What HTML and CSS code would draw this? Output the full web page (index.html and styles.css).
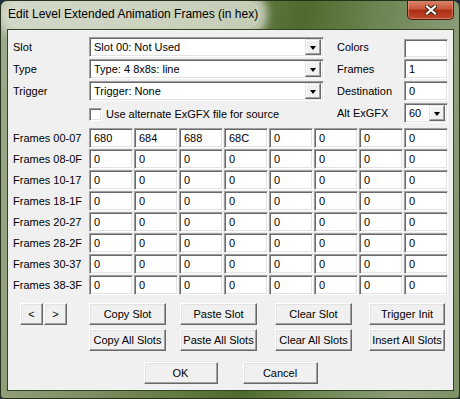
FILE: index.html
```html
<!DOCTYPE html>
<html lang="en">
<head>
    <meta charset="UTF-8">
    <title>Edit Level Extended Animation Frames (in hex)</title>
    <link rel="stylesheet" href="styles.css">
</head>
<body>
<div class="window">
    <div class="titlebar">
        <span class="title">Edit Level Extended Animation Frames (in hex)</span>
        <div class="close">
            <svg width="12" height="10" viewBox="0 0 12 10">
                <path d="M2 1.5 L10 8.5 M10 1.5 L2 8.5" stroke="#3b1f16" stroke-width="4.2" stroke-linecap="square"/>
                <path d="M2 1.5 L10 8.5 M10 1.5 L2 8.5" stroke="#fff" stroke-width="2.2" stroke-linecap="square"/>
            </svg>
        </div>
    </div>

    <div class="client">
        <!-- slot settings -->
        <div class="settings">
            <span class="label">Slot</span>
            <div class="combo sunken"><span>Slot 00: Not Used</span><i class="drop"></i></div>
            <span class="label side">Colors</span>
            <div class="edit sunken colors"></div>

            <span class="label">Type</span>
            <div class="combo sunken"><span>Type: 4 8x8s: line</span><i class="drop"></i></div>
            <span class="label side">Frames</span>
            <div class="edit sunken">1</div>

            <span class="label">Trigger</span>
            <div class="combo sunken"><span>Trigger: None</span><i class="drop"></i></div>
            <span class="label side">Destination</span>
            <div class="edit sunken">0</div>

            <span></span>
            <label class="check"><span class="box sunken"></span>Use alternate ExGFX file for source</label>
            <span class="label side">Alt ExGFX</span>
            <div class="combo sunken"><span>60</span><i class="drop"></i></div>
        </div>

        <!-- frame table -->
        <div class="frames" id="frames"></div>

        <div class="actions">
            <div class="nav"><button class="btn">&lt;</button><button class="btn">&gt;</button></div>
            <button class="btn">Copy Slot</button>
            <button class="btn">Paste Slot</button>
            <button class="btn">Clear Slot</button>
            <button class="btn last">Trigger Init</button>
            <span></span>
            <button class="btn">Copy All Slots</button>
            <button class="btn">Paste All Slots</button>
            <button class="btn">Clear All Slots</button>
            <button class="btn last">Insert All Slots</button>
        </div>

        <div class="footer">
            <button class="btn ok">OK</button>
            <button class="btn cancel">Cancel</button>
        </div>
    </div>
</div>
<script type="text/javascript">
    var frames = document.querySelector("#frames");
    var names = ["00-07", "08-0F", "10-17", "18-1F", "20-27", "28-2F", "30-37", "38-3F"];
    var first = ["680", "684", "688", "68C", "0", "0", "0", "0"];

    for (var r = 0; r < names.length; r++) {
        var label = document.createElement("span");
        label.className = "label";
        label.innerText = "Frames " + names[r];
        frames.appendChild(label);

        for (var c = 0; c < 8; c++) {
            var cell = document.createElement("div");
            cell.className = "edit sunken";
            cell.innerText = r == 0 ? first[c] : "0";
            frames.appendChild(cell);
        }
    }
</script>
</body>
</html>
```

FILE: styles.css
```css
*{
    box-sizing: border-box;
}
body{
    margin: 0;
    background-color: #1f2c44;
    font-family: "Liberation Sans", Arial, sans-serif;
    font-size: 11px;
    color: #000;
}
.window{
    width: 460px;
    height: 399px;
    display: flex;
    flex-direction: column;
    border: 1px solid #26301a;
    border-radius: 7px 7px 4px 4px;
    background: linear-gradient(100deg, #9fab8d 0%, #7e8f63 30%, #4f6a2d 58%, #6c8552 72%, #8b9c79 88%, #7d9166 100%);
    overflow: hidden;
}
.titlebar{
    height: 28px;
    display: flex;
    align-items: flex-start;
    padding-left: 7px;
}
.title{
    font-size: 12px;
    line-height: 27px;
    padding: 0 2px;
    margin-left: -2px;
    background: rgba(226, 230, 216, .78);
    box-shadow: 0 0 9px 7px rgba(226, 230, 216, .78);
    border-radius: 10px;
}
.close{
    margin: -1px 5px 0 auto;
    width: 47px;
    height: 20px;
    display: flex;
    align-items: center;
    justify-content: center;
    border: 1px solid #4a1e12;
    border-top: none;
    border-radius: 0 0 5px 5px;
    background: linear-gradient(#dc8a72 0%, #c9583b 45%, #ad2f14 55%, #c0482a 100%);
    box-shadow: inset 0 0 0 1px rgba(255, 190, 170, .4);
}
.client{
    flex: 1;
    margin: 0 5px 7px 6px;
    border: 1px solid #34421f;
    background-color: #f0f0f0;
}

/*3D edges*/
.sunken{
    background-color: #fff;
    border: 1px solid;
    border-color: #a0a0a0 #fff #fff #a0a0a0;
    box-shadow: inset 1px 1px #696969, inset -1px -1px #e3e3e3;
}
.btn{
    font: inherit;
    color: #000;
    padding: 0;
    background-color: #f0f0f0;
    border: 1px solid;
    border-color: #fff #696969 #696969 #fff;
    box-shadow: inset -1px -1px #a0a0a0, inset 1px 1px #e3e3e3;
    outline: none;
}

.label{
    line-height: 20px;
    white-space: nowrap;
}

/*top settings*/
.settings{
    margin-top: 7px;
    padding-left: 5px;
    display: grid;
    grid-template-columns: 76px 235px 80px 44px;
    grid-auto-rows: 22px;
}
.settings .side{
    padding-left: 13px;
}
.combo{
    height: 20px;
    display: flex;
    align-items: center;
    padding: 0 2px 0 4px;
    white-space: nowrap;
}
.drop{
    margin-left: auto;
    width: 16px;
    height: 16px;
    display: flex;
    align-items: center;
    justify-content: center;
    background-color: #f0f0f0;
    border: 1px solid;
    border-color: #e3e3e3 #696969 #696969 #e3e3e3;
    box-shadow: inset -1px -1px #a0a0a0, inset 1px 1px #fff;
}
.drop::after{
    content: "";
    border-left: 3.5px solid transparent;
    border-right: 3.5px solid transparent;
    border-top: 4px solid #000;
    margin-top: 1px;
}
.edit{
    height: 20px;
    line-height: 18px;
    padding-left: 4px;
}
.colors{
    margin-top: 2px;
    height: 19px;
}
.check{
    display: flex;
    align-items: center;
    height: 20px;
    margin-top: 1px;
}
.box{
    width: 13px;
    height: 13px;
    margin-right: 4px;
}

/*frame table*/
.frames{
    margin-top: 3px;
    padding-left: 5px;
    display: grid;
    grid-template-columns: 75px repeat(8, 44px);
    grid-auto-rows: 20px;
    gap: 1px;
}

/*buttons*/
.actions{
    margin-top: 8px;
    padding-left: 12px;
    display: grid;
    grid-template-columns: 69px 91px 95px 94px 76px;
    grid-auto-rows: 22px;
    row-gap: 4px;
}
.actions .btn{
    width: 77px;
}
.actions .last{
    width: 76px;
}
.nav{
    display: flex;
    gap: 1px;
}
.nav .btn{
    width: 23px;
}
.footer{
    margin-top: 11px;
    display: flex;
    justify-content: center;
    gap: 25px;
}
.footer .btn{
    height: 22px;
}
.ok{
    width: 74px;
}
.cancel{
    width: 75px;
}
```
